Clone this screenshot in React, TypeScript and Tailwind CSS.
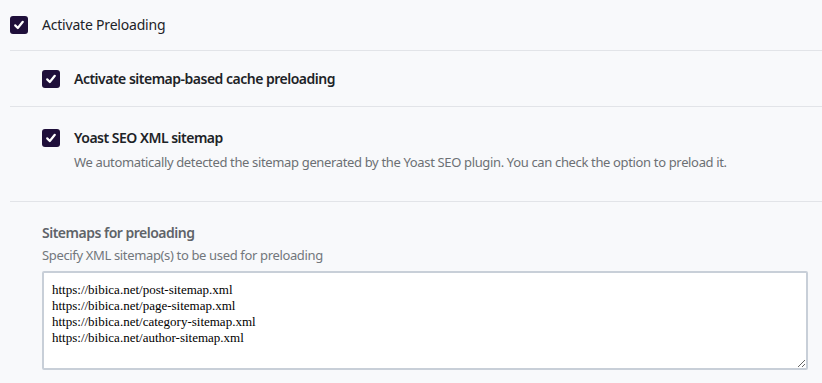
import React from 'react';

function Box() {
  return (
    <span className="flex h-[18px] w-[18px] shrink-0 items-center justify-center rounded-[3px] bg-[#1f0f3a]">
      <svg width="12" height="12" viewBox="0 0 12 12" fill="none">
        <path d="M2.2 6.4 4.8 9 9.8 2.8" stroke="white" strokeWidth="2.2" strokeLinecap="round" strokeLinejoin="round" />
      </svg>
    </span>
  );
}

const urls = [
  'https://bibica.net/post-sitemap.xml',
  'https://bibica.net/page-sitemap.xml',
  'https://bibica.net/category-sitemap.xml',
  'https://bibica.net/author-sitemap.xml',
];

export default function App() {
  return (
    <div className="h-[383px] w-[822px] overflow-hidden bg-[#f8f9fb] pl-[10px] font-['Noto_Sans',sans-serif]">
      <div className="flex h-[51px] items-center gap-[14px] border-b border-[#e2e4e8] pb-[1px]">
        <Box />
        <span className="text-[14px] tracking-[-0.2px] text-[#1d2327]">Activate Preloading</span>
      </div>

      <div className="flex h-[56px] items-center gap-[14px] border-b border-[#e2e4e8] pl-[32px]">
        <Box />
        <span className="text-[14px] font-semibold tracking-[-0.5px] text-[#1d2327]">Activate sitemap-based cache preloading</span>
      </div>

      <div className="h-[95px] border-b border-[#e2e4e8] pl-[32px] pt-[20px]">
        <div className="flex items-center gap-[14px]">
          <Box />
          <span className="text-[14px] font-semibold tracking-[-0.5px] text-[#1d2327]">Yoast SEO XML sitemap</span>
        </div>
        <p className="mt-[5px] pl-[32px] text-[13px] tracking-[-0.35px] text-[#6c7074]">
          We automatically detected the sitemap generated by the Yoast SEO plugin. You can check the option to preload it.
        </p>
      </div>

      <div className="pl-[32px] pt-[20px]">
        <div className="text-[14px] font-semibold tracking-[-0.5px] text-[#5f6469]">Sitemaps for preloading</div>
        <div className="mt-[3px] text-[13px] tracking-[-0.35px] text-[#72777c]">Specify XML sitemap(s) to be used for preloading</div>
        <textarea
          readOnly
          defaultValue={urls.join('\n')}
          className="mt-[5px] block h-[99px] w-[766px] rounded-[2px] border-2 border-[#c8cfd8] bg-white px-[8px] pb-[4px] pt-[9px] font-['Liberation_Serif',serif] text-[13px] leading-[16.3px] text-black outline-none"
        />
      </div>
    </div>
  );
}
